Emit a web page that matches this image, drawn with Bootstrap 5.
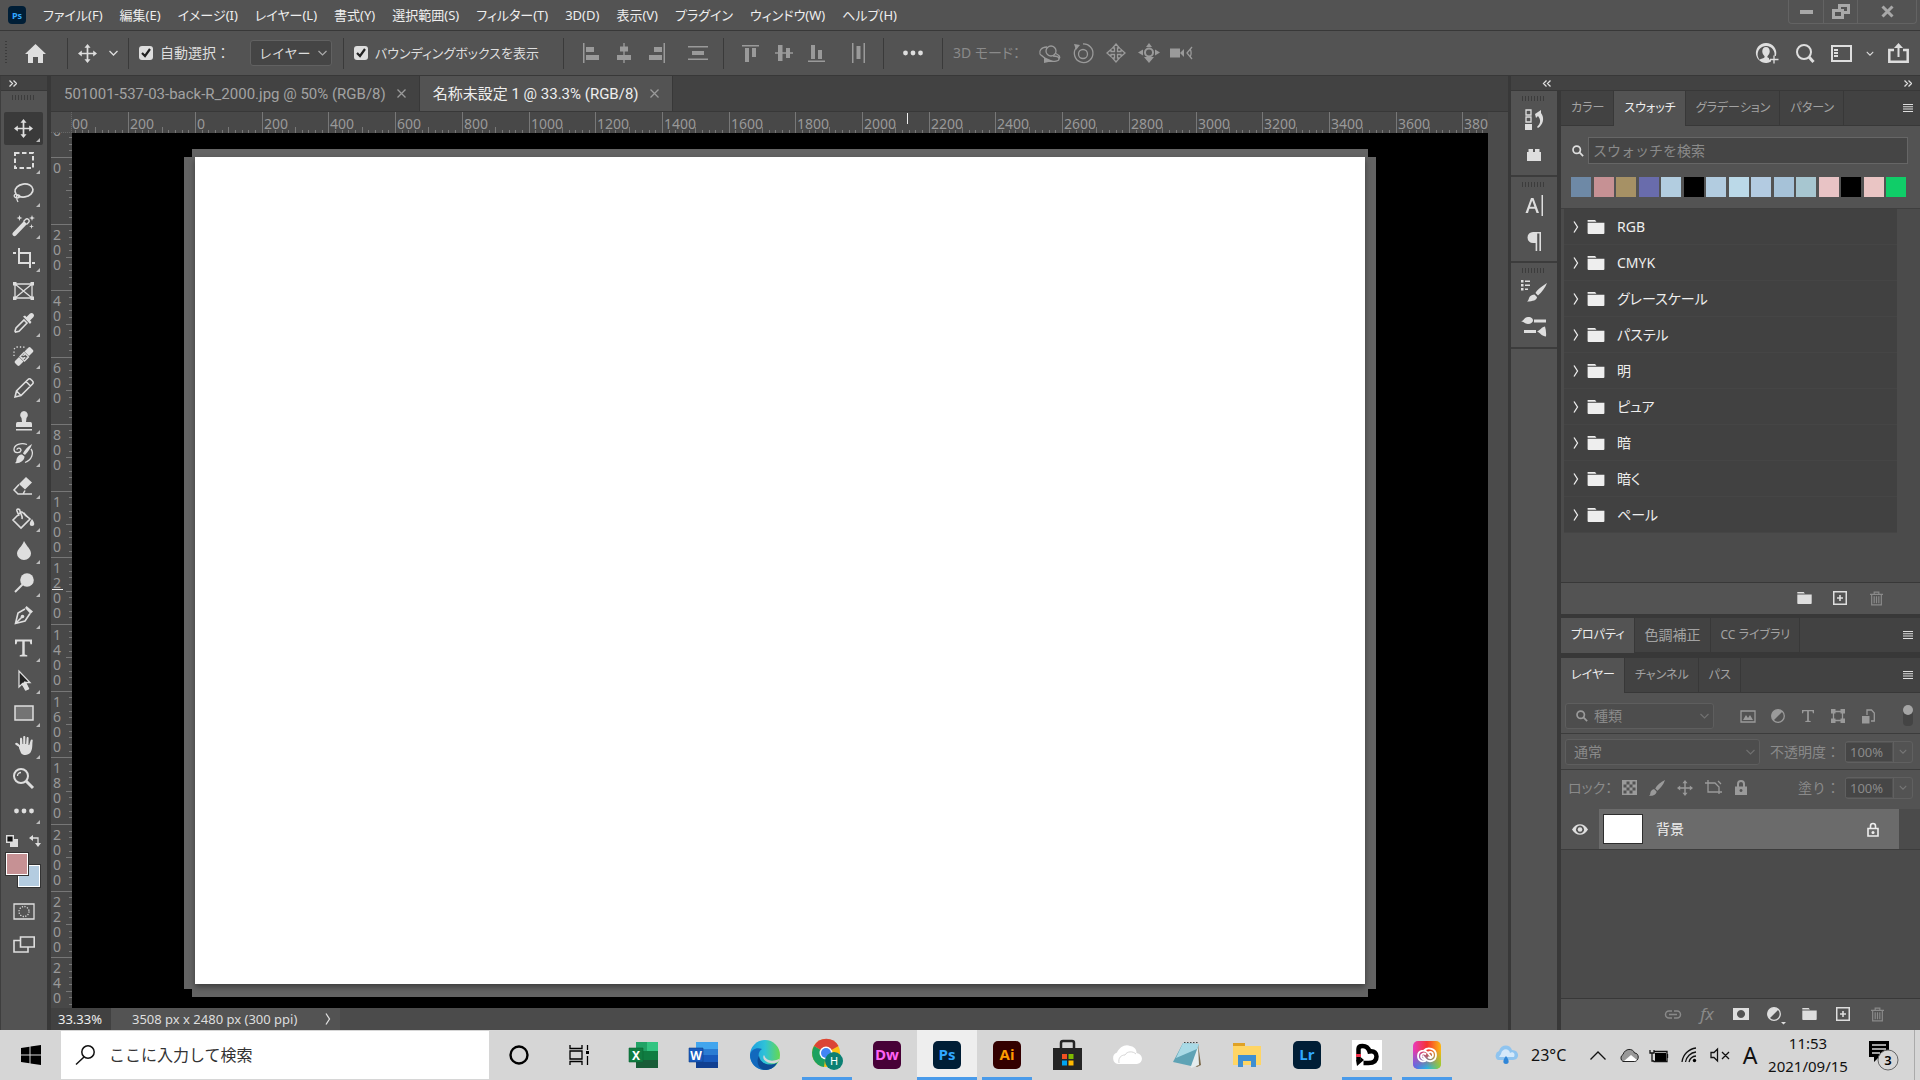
<!DOCTYPE html>
<html lang="ja">
<head>
<meta charset="utf-8">
<meta name="viewport" content="width=device-width, initial-scale=1">
<title>Photoshop</title>
<link href="https://cdn.jsdelivr.net/npm/bootstrap@5.3.0/dist/css/bootstrap.min.css" rel="stylesheet">
<style>
:root{--face:#535353;--dark:#424242;--mid:#4b4b4b;--line:#383838;--ink:#dedede;--dim:#a2a2a2;--off:#8a8a8a}
body{font-family:"Noto Sans","Noto Sans CJK JP",sans-serif;font-size:14px;line-height:20px;color:var(--ink);background:var(--line);font-feature-settings:"palt";overflow:hidden}
svg{display:block;flex:none;overflow:visible}
.btn{--bs-btn-padding-x:0;--bs-btn-padding-y:0;--bs-btn-border-width:0;--bs-btn-border-radius:0;--bs-btn-color:var(--ink);--bs-btn-hover-color:#fff;display:flex;align-items:center;justify-content:center;font-size:14px;line-height:20px;flex:none}
.flat{background:var(--face)}
a{color:inherit;text-decoration:none}
.f{fill:currentColor}
.s{fill:none;stroke:currentColor;stroke-width:2}
.s1{fill:none;stroke:currentColor;stroke-width:1.3}
.kj{font-size:14px;font-feature-settings:normal}
/* menu bar */
.menubar{height:31px;border-bottom:1px solid var(--line)}
.menus{gap:17px;color:#eee;font-size:13px}
.winctl{height:24px;border:1px solid #636363;border-top:0;border-radius:0 0 4px 4px;margin-right:3px;color:#a8a8a8}
.winctl .btn{height:23px;width:34px;color:#a8a8a8}
.winctl .btn+.btn{border-left:1px solid #636363}
.winctl .btn:last-child{width:59px}
/* option bar */
.optbar{height:45px;border-bottom:1px solid var(--line)}
.grip{width:2px;height:24px;margin-left:5px;background:repeating-linear-gradient(#3c3c3c 0 1px,transparent 1px 3px)}
.vsep{width:1px;height:31px;background:#3a3a3a;flex:none}
.w33{width:33px;height:30px}.w50{width:50px;height:30px}.w60{width:60px;height:30px}
.optbar .grp{padding-left:10px}
.pick{padding-left:10px;gap:7px}
.grey{color:#9a9a9a}
.form-check-input.box{width:14px;height:14px;margin:0;border:0;border-radius:3px;background-color:var(--ink);background-size:12px;box-shadow:none;flex:none}
.box:checked{background-color:var(--ink);background-image:url("data:image/svg+xml,%3csvg xmlns='http://www.w3.org/2000/svg' viewBox='0 0 12 12'%3e%3cpath fill='none' stroke='%23222' stroke-width='2.2' d='M2 6l3 3 5-7'/%3e%3c/svg%3e")}
.sel{height:26px;border:1px solid #616161;border-radius:3px;background-color:#454545;color:var(--ink);font-size:13px;line-height:20px;padding:0 20px 0 8px;background-size:9px 6px;background-position:right 4px center;background-image:url("data:image/svg+xml,%3csvg xmlns='http://www.w3.org/2000/svg' viewBox='0 0 9 6'%3e%3cpath fill='none' stroke='%23aaa' stroke-width='1.2' d='M.5 1l4 4 4-4'/%3e%3c/svg%3e")}
.sel.off{background-color:#4d4d4d;border-color:#5e5e5e;color:var(--off);font-size:14px;background-image:url("data:image/svg+xml,%3csvg xmlns='http://www.w3.org/2000/svg' viewBox='0 0 9 6'%3e%3cpath fill='none' stroke='%23707070' stroke-width='1.2' d='M.5 1l4 4 4-4'/%3e%3c/svg%3e")}
/* tool column */
.tools{width:48px;margin-right:3px;border-right:1px solid var(--line);border-left:1px solid #3e3e3e}
.strip{height:15px;background:var(--dark);color:var(--ink);border-bottom:1px solid var(--line)}
.hgrip{height:5px;background:repeating-linear-gradient(90deg,#3c3c3c 0 1px,transparent 1px 3px);width:24px;margin:4px auto 0}
.toolset{height:715px;margin-top:12px}
.toolset .btn{flex:1 1 0;width:39px;margin-left:3px;position:relative}
.toolset .btn.active{background:#3a3a3a;border-radius:2px}
.more::after{content:"";position:absolute;right:3px;bottom:3px;border:2px solid transparent;border-right-color:#bbb;border-bottom-color:#bbb}
.chips{height:50px;width:35px;margin-left:5px;position:relative}
.chip{position:absolute;width:22px;height:22px;border:1px solid #fff;outline:1px solid #333}
.chip.fg{left:0;top:18px;background:#c69194;z-index:1}.chip.bgc{left:12px;top:30px;background:#b4cce0}
/* document */
.doctabs{height:36px;background:var(--dark);border-bottom:1px solid var(--line)}
.doctab{padding:0 13px;border-right:1px solid var(--line);gap:11px;color:var(--dim);font-size:15px;font-family:Roboto,"Noto Sans CJK JP",sans-serif}
.doctab.on{background:var(--face);color:#eee}
.rulers{display:grid;grid-template:21px 1fr 22px/21px 1fr 20px}
.ruler{position:relative;overflow:hidden;background:#484848;color:#999;font-size:14px;line-height:15px;font-feature-settings:normal}
.ruler i{position:absolute;background:#777}
.ruler span{position:absolute}
.rh span{top:4px}
.rv span{left:2px;width:8px;word-break:break-all}
.ruler .cur{background:#eee}
.corner{background:#4d4d4d;border-right:1px dotted #666;border-bottom:1px dotted #666}
.stage{background:#000;display:flex}
.sheet{flex:1;margin:24px 123px;position:relative;z-index:0;background:#fff}
.sheet::before,.sheet::after{content:"";position:absolute;z-index:-2;background:#646464;inset:0 -11px -5px}
.sheet::after{inset:-8px -3px -13px}
.sheet div{position:absolute;inset:0;background:#fff;box-shadow:0 3px 6px #0006;z-index:-1}
.gutter{background:var(--mid)}
.status{grid-column:1/4;background:var(--mid);font-size:13px}
.zoomval{width:60px;background:#414141;color:#eee;border:0;padding:0 0 0 7px;font-size:13px}
.docinfo{width:229px;padding:0 9px 0 21px}
/* dock */
.dock{width:47px;border-right:1px solid var(--line);margin-right:3px}
.dgroup{height:86px;border-bottom:2px solid #3c3c3c;padding-top:1px}
.dgroup .btn{height:36px;width:100%}
/* panels */
.panels{width:359px}
.ptabs{height:35px;background:var(--dark);border-bottom:1px solid var(--line);color:var(--dim);font-size:12px}
.ptab{padding:0 9px 0 10px;border-right:1px solid var(--line);height:35px}
.ptab.on{background:var(--face);color:#eee}
.find{height:27px;background:#454545;border:1px solid #666;border-radius:0;color:var(--ink);font-size:14px;padding:0 4px;font-feature-settings:normal}
.find::placeholder{color:var(--off)}
.sw{width:20px;height:20px;flex:none}
.swlist{background:var(--mid);border-top:1px solid #3f3f3f;height:374px}
.swrow{height:36px;margin:0 23px 0 3px;background:#414141;border-bottom:1px solid #454545;padding-left:9px;color:#eee}
.pfoot{height:32px;border-top:1px solid var(--line)}
.pfoot .btn{width:34px;height:30px}
.pfoot .btn.w36{width:36px}
.rowline{border-bottom:1px solid #3c3c3c}
.num{width:46px;height:18px;border:0;background:#464646;color:var(--off);font-size:13px;padding:0 4px}
.numbox{height:22px;border:1px solid #606060;border-radius:3px;width:68px}
.numbox .btn{width:19px;height:20px;border-left:1px solid #606060;color:#777}
.offc{color:var(--off)}
.ic28 .btn{width:28px;height:26px}
.ic30 .btn{width:30px;height:26px}
.lname{background:#6b6b6b;width:300px;height:40px;color:#eee}
.thumb{width:40px;height:30px;background:#fff;border:1px solid #2e2e2e;margin:0 13px 0 4px}
/* taskbar */
.taskbar{height:50px;background:#d6d6d6;color:#111}
.taskbar .btn{--bs-btn-color:#111;height:50px}
.tsearch{width:428px;height:48px;background:#fff;padding-left:14px;gap:14px}
.tsearch input{border:0;outline:0;background:none;font-size:16px;line-height:24px;width:300px;padding:0}
.tsearch input::placeholder{color:#333}
.apps .btn{width:60px;position:relative}
.run::after{content:"";position:absolute;left:5px;right:5px;bottom:0;height:3px;background:#4a9bea}
.run.cur{background:#eee}.run.cur::after{left:0;right:0}
.tile{width:28px;height:28px;border-radius:5px;font:bold 15px/27px "Open Sans",sans-serif;text-align:center}
.clock{width:88px;font-size:15px;line-height:23px}
</style>
</head>
<body class="d-flex flex-column vh-100">
<svg width="0" height="0" class="position-absolute" aria-hidden="true"><defs>
<symbol id="move" viewBox="0 0 20 20"><path class="f" d="M10 0l3.200 4h-2.300v5.100H16V6.800l4 3.200-4 3.200v-2.300h-5.100V16h2.300L10 20l-3.200-4h2.300v-5.100H4v2.300L0 10l4-3.200v2.300h5.100V4H6.800z"/></symbol>
<symbol id="chev" viewBox="0 0 9 6"><path class="s1" d="M.5 1l4 4 4-4"/></symbol>
<symbol id="rchev" viewBox="0 0 6 12"><path class="s1" d="M1 .5L4.500 6 1 11.500"/></symbol>
<symbol id="dbl" viewBox="0 0 8 7"><path class="s1" d="M.5.500l3 3-3 3M4.500.500l3 3-3 3"/></symbol>
<symbol id="folder" viewBox="0 0 18 15"><path class="f" d="M0 0h8l1.500 2H0zM0 3h18v11a1 1 0 0 1-1 1H1a1 1 0 0 1-1-1z"/></symbol>
<symbol id="plus" viewBox="0 0 14 14"><path class="f" d="M0 0h14v14H0zM1.500 1.500v11h11v-11zM6.200 4h1.600v2.200H10v1.600H7.800V10H6.200V7.800H4V6.200h2.200z" fill-rule="evenodd"/></symbol>
<symbol id="trash" viewBox="0 0 14 15"><path class="s1" d="M0 3h14M4.500 3V.7h5V3M1.800 3v11.300h10.400V3M4.500 5v7.500M7 5v7.500M9.500 5v7.500"/></symbol>
<symbol id="hamb" viewBox="0 0 10 8"><path class="f" d="M0 0h10v1H0zM0 2.300h10v1H0zM0 4.600h10v1H0zM0 7h10v1H0z"/></symbol>
<symbol id="mag" viewBox="0 0 14 14"><circle class="s" cx="5.500" cy="5.500" r="4.300"/><path class="s" stroke-width="3" d="M8.700 8.700L13 13"/></symbol>
<symbol id="x" viewBox="0 0 9 9"><path class="s1" d="M.5.500l8 8M8.500.500l-8 8"/></symbol>
<symbol id="dots" viewBox="0 0 20 6"><circle class="f" cx="2.500" cy="3" r="2.400"/><circle class="f" cx="10" cy="3" r="2.400"/><circle class="f" cx="17.500" cy="3" r="2.400"/></symbol>
<symbol id="half" viewBox="0 0 14 14"><circle class="s1" cx="7" cy="7" r="6.300"/><path class="f" d="M11.500 2.500A6.300 6.300 0 1 0 2.500 11.500z"/></symbol>
<symbol id="lock" viewBox="0 0 12 15"><path class="s" stroke-width="1.600" d="M3 7V4a3 3 0 0 1 6 0v3"/><path class="f" d="M0 6.500h12V15H0zM6 9a1.500 1.500 0 1 0 .01 0z" fill-rule="evenodd"/></symbol>
<symbol id="brush" viewBox="0 0 18 18"><path class="f" d="M18 0C13 2 9 6 7 9.500l2.500 2.500C13 9 16.500 5 18 0zM6 10.500l2.500 2.500c0 3-3 5-8.500 5 2-1.500 1-3 2-5s2.500-2.500 4-2.500z"/></symbol>
<symbol id="tee" viewBox="0 0 18 18"><path class="f" d="M0 0h18v5h-1.600l-.8-3H10.300v14l2.700.6V18H5v-1.400l2.700-.6V2H2.400l-.8 3H0z"/></symbol>
</defs></svg>

<header class="menubar flat d-flex align-items-start">
  <nav class="menus d-flex align-items-center h-100 ps-2" aria-label="メニュー">
    <svg width="18" height="18" viewBox="0 0 18 18"><rect width="18" height="18" rx="4" fill="#001e36"/><text x="9" y="12.500" fill="#31a8ff" font-size="9" font-weight="700" text-anchor="middle">Ps</text></svg>
    <a href="#">ファイル(F)</a><a href="#">編集(E)</a><a href="#">イメージ(I)</a><a href="#">レイヤー(L)</a><a href="#">書式(Y)</a><a href="#">選択範囲(S)</a><a href="#">フィルター(T)</a><a href="#">3D(D)</a><a href="#">表示(V)</a><a href="#">プラグイン</a><a href="#">ウィンドウ(W)</a><a href="#">ヘルプ(H)</a>
  </nav>
  <div class="winctl d-flex ms-auto">
    <button class="btn" aria-label="最小化"><svg width="13" height="4"><rect class="f" width="13" height="4"/></svg></button>
    <button class="btn" aria-label="元に戻す"><svg width="18" height="15"><path class="f" fill-rule="evenodd" d="M6 0h12v10h-6v5H0V5h6zM9 3v2h3v2h3V3zM3 8v4h6V8z"/></svg></button>
    <button class="btn" aria-label="閉じる"><svg width="13" height="11"><path class="s" style="stroke-width:3" d="M1.500.500l10 10M11.500.500l-10 10"/></svg></button>
  </div>
</header>

<div class="optbar flat d-flex align-items-center">
  <div class="grip"></div>
  <button class="btn w60 pe-1" aria-label="ホーム"><svg width="21" height="19"><path class="f" d="M10.500 0L21 10h-3v9h-5v-6H8v6H3v-9H0z"/></svg></button>
  <div class="vsep"></div>
  <button class="btn w60 gap-2" aria-label="移動ツール"><svg width="19" height="19"><use href="#move"/></svg><svg class="ms-1" width="9" height="6"><use href="#chev"/></svg></button>
  <div class="vsep"></div>
  <div class="pick d-flex align-items-center" style="width:121px">
    <input class="form-check-input box" type="checkbox" id="auto" checked><label class="kj text-nowrap" for="auto">自動選択：</label>
  </div>
  <select class="form-select sel" style="width:82px" aria-label="選択対象"><option>レイヤー</option></select>
  <div class="vsep" style="margin-left:11px"></div>
  <div class="pick d-flex align-items-center" style="width:219px">
    <input class="form-check-input box" type="checkbox" id="bbox" checked><label class="text-nowrap" style="font-size:13px" for="bbox">バウンディングボックスを表示</label>
  </div>
  <div class="vsep"></div>
  <div class="grp d-flex grey">
    <button class="btn w33 grey" aria-label="左揃え"><svg width="16" height="20"><path class="f" d="M0 0h1.500v20H0zM3 4h8v5H3zM3 12h13v5H3z"/></svg></button>
    <button class="btn w33 grey" aria-label="水平中央"><svg width="14" height="20"><path class="f" d="M6.300 0h1.400v20H6.300zM3 3.500h8v5H3zM0 12h14v5H0z"/></svg></button>
    <button class="btn w33 grey" aria-label="右揃え"><svg width="16" height="20"><path class="f" d="M14.500 0H16v20h-1.500zM5 4h8v5H5zM0 12h13v5H0z"/></svg></button>
    <button class="btn w50 grey" aria-label="垂直分布"><svg width="20" height="14"><path class="f" d="M0 0h20v1.500H0zM0 12.500h20V14H0zM4 5h12v4H4z"/></svg></button>
  </div>
  <div class="vsep"></div>
  <div class="grp d-flex">
    <button class="btn w33 grey" aria-label="上揃え"><svg width="17" height="17"><path class="f" d="M0 0h17v1.500H0zM3 3h4v14H3zM10 3h4v9h-4z"/></svg></button>
    <button class="btn w33 grey" aria-label="垂直中央"><svg width="18" height="16"><path class="f" d="M0 7.300h18v1.400H0zM3 0h4.500v16H3zM11 3h4v10h-4z"/></svg></button>
    <button class="btn w33 grey" aria-label="下揃え"><svg width="17" height="17"><path class="f" d="M0 15.500h17V17H0zM3 0h4v14H3zM10 5h4v9h-4z"/></svg></button>
    <button class="btn w50 grey" aria-label="水平分布"><svg width="13" height="20"><path class="f" d="M0 0h1.500v20H0zM11.500 0H13v20h-1.500zM4.500 3h4v13h-4z"/></svg></button>
  </div>
  <div class="vsep"></div>
  <button class="btn w50 mx-1" aria-label="詳細"><svg width="20" height="6"><use href="#dots"/></svg></button>
  <div class="vsep"></div>
  <span class="offc" style="width:90px;padding-left:10px">3D モード：</span>
  <button class="btn w33 grey" aria-label="3D オービット"><svg width="22" height="20"><circle class="s1" cx="12" cy="8" r="5"/><path class="s1" d="M8 4C2 4 0 8 1 11c1 2 4 2 6 6M14 13c3 0 6 1 6 3s-4 3-11 2M16 10c4 2 6 4 4 6"/><path class="f" d="M5 14l9 4-9 2z"/></svg></button>
  <button class="btn w33 grey" aria-label="3D ロール"><svg width="20" height="20"><circle class="s1" cx="10" cy="11" r="4.500"/><path class="s1" d="M3 5a9.300 9.300 0 1 0 7-4"/><path class="f" d="M1 1l6 1-4 5z"/></svg></button>
  <button class="btn w33 grey" aria-label="3D パン"><svg width="20" height="20" viewBox="0 0 20 20"><path class="s1" d="M10 1l3.500 4h-2v3.500h3.500v-2L19 10l-4 3.500v-2h-3.500V15h2L10 19l-3.500-4h2v-3.500H5v2L1 10l4-3.500v2h3.500V5h-2z"/></svg></button>
  <button class="btn w33 grey" aria-label="3D スライド"><svg width="22" height="20"><circle class="s" cx="11" cy="9.500" r="4"/><path class="f" d="M11 0l3 4H8zM0 9.500l5-3v6zM22 9.500l-5-3v6zM11 20l-5-6h10z"/></svg></button>
  <button class="btn w33 grey" aria-label="3D ズーム"><svg width="23" height="14"><path class="f" d="M0 2.500h10v9H0zM10 7l4-4v8z"/><path class="s1" d="M22 1l-5 6 5 6M20 3c1.500 2 1.500 6 0 8"/></svg></button>
  <div class="d-flex align-items-center ms-auto" style="margin-right:5px">
    <button class="btn w33" aria-label="招待"><svg width="23" height="21"><path class="f" d="M10 0a10 10 0 1 0 5 18.600v-2.200h-2V15c-2-.3-2-1.500-1-2.500 3-3 2-8.500-2-8.500s-5 5.500-2 8.500c1 1 1 2.200-1 2.800-2 .5-3 1-3.500 1.500A8.500 8.500 0 1 1 18.500 10v3h1.300A10 10 0 0 0 10 0z"/><path class="s1" d="M18 12.500v8M14 16.500h8.500"/></svg></button>
    <button class="btn w33 ms-1" aria-label="検索"><svg width="18" height="19"><circle class="s" cx="8" cy="8" r="7"/><path class="s" style="stroke-width:3" d="M13 13l4.500 5"/></svg></button>
    <button class="btn w33 ms-1" aria-label="ワークスペース"><svg width="21" height="17"><path class="s" d="M1 1h19v15H1z"/><path class="f" d="M3 4h4v2H3zM3 7h4v2H3zM3 10h4v2H3z"/></svg></button>
    <button class="btn px-2" aria-label="ワークスペース一覧"><svg width="8" height="5" viewBox="0 0 9 6"><use href="#chev"/></svg></button>
    <button class="btn w33" aria-label="共有"><svg width="21" height="20"><path class="s" style="stroke-width:2.500" d="M6 7H1.300v11.700h18.400V7H15"/><path class="s" d="M10.500 14V3"/><path class="f" d="M10.500 0l4.500 5H6z"/></svg></button>
  </div>
</div>

<main class="d-flex flex-grow-1" style="min-height:0">
  <aside class="tools flat d-flex flex-column" aria-label="ツール">
    <div class="strip d-flex align-items-center ps-2"><svg width="8" height="7"><use href="#dbl"/></svg></div>
    <div class="hgrip"></div>
    <div class="toolset d-flex flex-column">
      <button class="btn more active" aria-label="移動"><svg width="19" height="19"><use href="#move"/></svg></button>
      <button class="btn more" aria-label="選択"><svg width="20" height="17"><path class="s" stroke-dasharray="4.500 2.500" d="M1 1h18v15H1z"/></svg></button>
      <button class="btn more" aria-label="なげなわ"><svg width="21" height="20"><ellipse class="s" style="stroke-width:1.700" cx="11" cy="7.500" rx="9" ry="6.500" transform="rotate(-8 11 7.500)"/><path class="s1" d="M3 11c-3 1-2 4 1 4s4-3 1-3-1 5 0 7"/></svg></button>
      <button class="btn more" aria-label="自動選択"><svg width="23" height="21"><path class="f" d="M1 17.500L12 6l3 3L4 20.500a2.100 2.100 0 0 1-3-3z"/><path class="s1" d="M11.500 6.500l2-2a2 2 0 0 1 3 3l-2 2"/><path class="f" d="M7.500 0l.8 2.200 2.200.8-2.200.8L7.500 6l-.8-2.200L4.500 3l2.200-.8zM20 0l.8 2.200L23 3l-2.200.8L20 6l-.8-2.200L17 3l2.200-.8zM19.500 9l.6 1.900 1.900.6-1.900.6-.6 1.900-.6-1.900-1.900-.6 1.900-.6z"/></svg></button>
      <button class="btn more" aria-label="切り抜き"><svg width="22" height="20"><path class="s" d="M0 5h3M6 0v15h12M22 15h-3M6 5h11v15"/></svg></button>
      <button class="btn" aria-label="フレーム"><svg width="21" height="18"><path class="s1" d="M2 2h17v14H2zM2 2l17 14M19 2L2 16"/><path class="f" d="M0 0h3.500v3.500H0zM17.500 0H21v3.500h-3.500zM0 14.500h3.500V18H0zM17.500 14.500H21V18h-3.500z"/></svg></button>
      <button class="btn more" aria-label="スポイト"><svg width="20" height="20"><path class="s" style="stroke-width:1.600" d="M10 7l3 3-8 8.200-3.500.8-.5-.8 1-3.200z"/><path class="f" d="M9 3.500l2-1 1.500 1.500L16 .6a2.500 2.500 0 0 1 3.500 3.500L16 7.500 17.500 9l-1.500 2z"/></svg></button>
      <button class="btn more" aria-label="修復ブラシ"><svg width="21" height="20"><path class="f" d="M2 15l4-4 4.500 4.500-4 4q-1 .8-2 0L2 17q-.8-1 0-2zM15.500 1.500q1-.8 2 0L20 4q.8 1 0 2l-4 4-4.500-4.500z"/><path class="s1" d="M7 10.500l4-4 4.500 4.500-4 4z"/><path class="s1" stroke-dasharray="1.500 1.500" d="M8 11.500l4 .5 2 1M10 8.500l.5 4 1 2M11.500 8v4h3"/><path class="s1" stroke-dasharray="1.300 2" d="M1 10V5q0-4 4-4h5q2 0 3 2"/></svg></button>
      <button class="btn more" aria-label="鉛筆"><svg width="20" height="20"><path class="s" style="stroke-width:1.600" d="M1 19l1.500-6L14 1.500a2 2 0 0 1 3 0l1.500 1.500a2 2 0 0 1 0 3L7 17.500zM12 3.500l4.500 4.500M2.500 13L7 17.500"/></svg></button>
      <button class="btn more" aria-label="スタンプ"><svg width="16" height="20"><path class="f" d="M8 0a4 4 0 0 1 2.500 7L10 11h4.500q1.500 0 1.500 2v3H0v-3q0-2 1.500-2H6l-.5-4A4 4 0 0 1 8 0zM0 18h16v1.600H0z"/></svg></button>
      <button class="btn more" aria-label="ヒストリーブラシ"><svg width="21" height="21"><path class="f" d="M19 1c-4 2-8 7-9 9.500l2 1.500c2-2 6-7 7-11zM9 11.500l2.500 2C11.500 18 6 21 2 20c2-1 1-3 2-5s3-4 5-3.500z"/><path class="s1" d="M14 1.500C8-1 1 2 1 6.500c0 4 6 4 7 1 0-3-4-3-4-.8M18 6c3 4 1 11-6 13.500"/></svg></button>
      <button class="btn more" aria-label="消しゴム"><svg width="21" height="18"><path class="f" d="M13 0l6 5.500-7 7L6 7z"/><path class="s" style="stroke-width:1.500" d="M6 7.500L1 13l4 4h5l2-3.500M5 17h14"/></svg></button>
      <button class="btn more" aria-label="塗りつぶし"><svg width="23" height="21"><path class="s" style="stroke-width:1.600" d="M9 4L1 12l8 8 9-9-8-7zM10 11c1-3-2-6-2-8s-4-3-3 0l2 5"/><path class="f" d="M17 10l-5-6c-1 2 1 5 5 6zM20 11c3 4 3 7 0 7s-3-3 0-7z"/></svg></button>
      <button class="btn more" aria-label="ぼかし"><svg width="14" height="19"><path class="f" d="M7 0c3 6 7 8 7 12.500a7 6.500 0 0 1-14 0C0 8 5 6 7 0z"/></svg></button>
      <button class="btn more" aria-label="覆い焼き"><svg width="20" height="20"><circle class="f" cx="13" cy="7" r="6.800"/><path class="s" d="M9 11l-8 8"/></svg></button>
      <button class="btn more" aria-label="ペン"><svg width="19" height="19"><path class="f" d="M12.500 0L19 5.500 16.500 8 11 2z"/><path class="s" style="stroke-width:1.600" d="M11 3L4 7 1.500 17.500 11 15l5-7.500M1.500 17.500L8 11"/><circle class="f" cx="8.500" cy="10.500" r="1.800"/></svg></button>
      <button class="btn more" aria-label="文字"><svg width="17" height="18"><use href="#tee"/></svg></button>
      <button class="btn more" aria-label="パス選択"><svg width="14" height="21"><path d="M2 1v16l3.500-3.500L8.500 20l3-1.300-3-6.200H13z" fill="#222" stroke="#dedede" stroke-width="1.300"/><path class="f" d="M4.500 14.500L8 11l4 8-3 1.500z"/></svg></button>
      <button class="btn more" aria-label="長方形"><svg width="20" height="16"><path d="M1 1h18v14H1z" fill="#747474" stroke="#dedede" stroke-width="1.500"/></svg></button>
      <button class="btn more" aria-label="手のひら"><svg width="18" height="19"><path class="f" d="M4 12V11L.4 8.600C-.5 7 1.500 6 3 7.500L5 9.200V3c0-1.600 2-1.600 2.200 0L7.500 8h.7V1c0-1.400 2.100-1.400 2.100 0v7h.8l.5-6c.1-1.500 2.100-1.300 2 .1L13.500 9h.7l1.500-4.800c.5-1.300 2.300-.8 2 .6C17 8 18 13 15.500 16.500 13.500 19.500 8 20 6 17z"/></svg></button>
      <button class="btn" aria-label="ズーム"><svg width="21" height="21"><circle class="s" cx="8" cy="8" r="7"/><path class="s1" d="M4.500 8A3.500 3.500 0 0 1 8 4.500"/><path class="s" style="stroke-width:3" d="M13 13l7 7"/></svg></button>
      <button class="btn more" aria-label="ツールバー編集"><svg width="20" height="6"><use href="#dots"/></svg></button>
    </div>
    <div class="chips mt-2">
      <div class="d-flex justify-content-between"><svg width="12" height="12" viewBox="0 0 12 12"><path class="f" d="M4 4h8v8H4z"/><path d="M.700.700h6.600v6.600H.700z" fill="#111" stroke="#dedede" stroke-width="1.400"/></svg><svg width="12" height="12" viewBox="0 0 12 12"><path class="s1" d="M3 3h6v6"/><path class="f" d="M0 3l4-3v6zM9 12L6 8h6z"/></svg></div>
      <div class="chip fg"></div><div class="chip bgc"></div>
    </div>
    <button class="btn mt-1" style="height:44px" aria-label="クイックマスク"><svg width="22" height="17"><path class="s1" d="M1 1h20v15H1z"/><circle class="s1" cx="11" cy="8.500" r="5" stroke-dasharray="1.200 1.400"/></svg></button>
    <button class="btn" style="height:22px" aria-label="スクリーンモード"><svg width="22" height="17"><path class="s" style="stroke-width:1.600" d="M7.500 1h13.700v10H7.500zM7.500 4.500H1V16h14v-5"/></svg></button>
  </aside>

  <section class="d-flex flex-column flex-grow-1" style="min-width:0;margin-right:3px">
    <div class="doctabs d-flex">
      <div class="doctab d-flex align-items-center"><span>501001-537-03-back-R_2000.jpg @ 50% (RGB/8)</span><button class="btn grey" aria-label="閉じる"><svg width="9" height="9"><use href="#x"/></svg></button></div>
      <div class="doctab on d-flex align-items-center"><span>名称未設定 1 @ 33.3% (RGB/8)</span><button class="btn grey" aria-label="閉じる"><svg width="9" height="9"><use href="#x"/></svg></button></div>
    </div>
    <div class="rulers flex-grow-1">
      <div class="corner"></div><div class="ruler rh" id="rh"></div><div class="gutter"></div>
      <div class="ruler rv" id="rv"></div>
      <div class="stage"><div class="sheet"><div></div></div></div>
      <div class="gutter"></div>
      <div class="status d-flex align-items-stretch">
        <input class="zoomval" value="33.33%" aria-label="ズーム率">
        <div class="docinfo flat d-flex align-items-center justify-content-between"><span>3508 px x 2480 px (300 ppi)</span><svg width="6" height="12"><use href="#rchev"/></svg></div>
      </div>
    </div>
  </section>

  <div class="d-flex flex-column">
    <div class="strip d-flex align-items-center justify-content-between" style="padding:0 8px 0 32px"><svg width="8" height="7" viewBox="0 0 8 7"><path class="s1" d="M3.500.500l-3 3 3 3M7.500.500l-3 3 3 3"/></svg><svg width="8" height="7"><use href="#dbl"/></svg></div>
    <div class="d-flex flex-grow-1">
      <aside class="dock flat">
        <div class="dgroup"><div class="hgrip"></div>
          <button class="btn" aria-label="ヒストリー"><svg width="19" height="21"><path class="s1" d="M1 1h5v5H1zM1 8h5v5H1z"/><path class="f" d="M0 15h7v6H0zM10 5l6-4v3c4 5 2 12-3 15l-1-1c4-4 4-7 1-11l-2 2z"/></svg></button>
          <button class="btn" aria-label="プラグイン"><svg width="14" height="12"><path class="f" d="M0 3h1.500V0H6v3h2V0h4.500v3H14v9H0z"/></svg></button></div>
        <div class="dgroup"><div class="hgrip"></div>
          <button class="btn" aria-label="文字パネル"><svg width="18" height="21"><path class="f" d="M6 3h2.500L14 18h-2.500L10 13.700H4.300L3 18H.500zM7.200 5.500L5 11.700h4.400zM16.500 0H18v21h-1.500z"/></svg></button>
          <button class="btn" aria-label="段落パネル"><svg width="14" height="19"><path class="f" d="M6 0h8v19h-1.600V1.600h-2.200V19H8.600v-8H6A5.500 5.500 0 0 1 6 0z"/></svg></button></div>
        <div class="dgroup"><div class="hgrip"></div>
          <button class="btn" aria-label="ブラシ"><svg width="26" height="22" viewBox="0 0 26 22"><path class="f" d="M0 0h2.500v2.500H0zM4 .500h5v1.500H4zM0 4h2.500v2.500H0zM4 4.500h5V6H4zM0 8h2.500v2.500H0zM4 8.500h3V10H4z"/><g transform="translate(6 3)"><path class="f" d="M20 0C15 3 10 7 8.500 10l2.500 2.500C15 9 18.500 4 20 0zM7.500 11.500l2.500 2.500c0 3-4 4.500-10 4.500 2-1.500 1.500-3 2.500-4.500s3-2.500 5-2.500z"/></g></svg></button>
          <button class="btn" aria-label="ブラシ設定"><svg width="26" height="20"><path class="f" d="M0 4c3 0 3-4 7-4s5 2 5 3.500S10 7 7 7 3 5 0 4zM13 2.500h12v3H13zM3 13h12v3H3zM16 14.500c3-1 5-5 8-5q1.500 5 1 10c-4 0-6-4-9-5z"/></svg></button></div>
      </aside>

      <aside class="panels flat d-flex flex-column">
        <div class="ptabs d-flex align-items-center">
          <a class="ptab d-flex align-items-center" href="#">カラー</a><a class="ptab on d-flex align-items-center" href="#">スウォッチ</a><a class="ptab d-flex align-items-center" href="#">グラデーション</a><a class="ptab d-flex align-items-center" href="#">パターン</a>
          <button class="btn ms-auto" style="margin-right:7px" aria-label="メニュー"><svg width="10" height="8"><use href="#hamb"/></svg></button>
        </div>
        <div class="d-flex align-items-center gap-1" style="padding:11px 12px 13px 11px"><svg width="12" height="12"><use href="#mag"/></svg><input class="find flex-grow-1" placeholder="スウォッチを検索" aria-label="スウォッチを検索"></div>
        <div class="d-flex justify-content-between" style="padding:0 14px 11px 10px">
          <div class="sw" style="background:#6e89a6"></div><div class="sw" style="background:#c69194"></div><div class="sw" style="background:#a69165"></div><div class="sw" style="background:#696cac"></div><div class="sw" style="background:#b2cde0"></div><div class="sw" style="background:#000"></div><div class="sw" style="background:#b2cce0"></div><div class="sw" style="background:#bbd9e8"></div><div class="sw" style="background:#b3cbe1"></div><div class="sw" style="background:#a6c2d8"></div><div class="sw" style="background:#a7c6d0"></div><div class="sw" style="background:#e8c3c5"></div><div class="sw" style="background:#000"></div><div class="sw" style="background:#eac5c4"></div><div class="sw" style="background:#10cd68"></div>
        </div>
        <div class="swlist" id="swlist"></div>
        <div class="pfoot d-flex justify-content-end" style="padding-right:26px">
          <button class="btn w36" aria-label="新規グループ"><svg width="15" height="12"><use href="#folder"/></svg></button>
          <button class="btn w36" aria-label="新規スウォッチ"><svg width="14" height="14"><use href="#plus"/></svg></button>
          <button class="btn w36 offc" aria-label="削除"><svg width="13" height="15"><use href="#trash"/></svg></button>
        </div>
        <div style="height:4px;background:var(--line)"></div>
        <div class="ptabs d-flex align-items-center">
          <a class="ptab on d-flex align-items-center" href="#">プロパティ</a><a class="ptab kj d-flex align-items-center" href="#">色調補正</a><a class="ptab d-flex align-items-center" href="#">CC ライブラリ</a>
          <button class="btn ms-auto" style="margin-right:7px" aria-label="メニュー"><svg width="10" height="8"><use href="#hamb"/></svg></button>
        </div>
        <div style="height:5px;background:var(--line)"></div>
        <div class="ptabs d-flex align-items-center">
          <a class="ptab on d-flex align-items-center" href="#">レイヤー</a><a class="ptab d-flex align-items-center" href="#">チャンネル</a><a class="ptab d-flex align-items-center" href="#">パス</a>
          <button class="btn ms-auto" style="margin-right:7px" aria-label="メニュー"><svg width="10" height="8"><use href="#hamb"/></svg></button>
        </div>
        <div class="rowline d-flex align-items-center ps-1" style="height:41px;padding-top:6px">
          <div class="position-relative"><select class="form-select sel off" style="width:149px;padding-left:28px" aria-label="種類"><option>種類</option></select><svg class="grey position-absolute" style="left:11px;top:7px" width="12" height="12"><use href="#mag"/></svg></div>
          <div class="ic30 d-flex grey" style="margin-left:19px">
            <button class="btn grey" aria-label="画像"><svg width="16" height="13"><path class="s1" d="M1 1h14v11H1z"/><path class="f" d="M3 10l3-5 2 3 2-3 3 5z"/></svg></button>
            <button class="btn grey" aria-label="調整"><svg width="14" height="14"><use href="#half"/></svg></button>
            <button class="btn grey" aria-label="テキスト"><svg width="12" height="12"><use href="#tee"/></svg></button>
            <button class="btn grey" aria-label="シェイプ"><svg width="14" height="14"><path class="s1" d="M2.500 2.500h9v9h-9z"/><path class="f" d="M0 0h4.500v4.500H0zM9.500 0H14v4.500H9.500zM0 9.500h4.500V14H0zM9.500 9.500H14V14H9.500z"/></svg></button>
            <button class="btn grey" aria-label="スマートオブジェクト"><svg width="13" height="15"><path class="s1" d="M5 6V1h4.500L12.300 4v8H9"/><path class="f" d="M0 7h7.500v7.500H0z"/></svg></button>
          </div>
          <svg class="ms-auto" width="10" height="22" style="margin-right:7px"><rect y="3" width="10" height="18" rx="4" fill="#444"/><circle cx="5" cy="5" r="5" fill="#a5a5a5"/></svg>
        </div>
        <div class="rowline d-flex align-items-center ps-1 offc" style="height:36px">
          <select class="form-select sel off" style="width:195px" aria-label="描画モード"><option>通常</option></select>
          <label class="ms-auto kj" for="opa">不透明度：</label>
          <div class="numbox d-flex align-items-center" style="margin:0 7px 0 5px"><input class="num" id="opa" value="100%"><button class="btn ms-auto" aria-label="開く"><svg width="8" height="5" viewBox="0 0 9 6"><use href="#chev"/></svg></button></div>
        </div>
        <div class="d-flex align-items-center offc ps-1 pb-1" style="height:39px">
          <span class="text-nowrap" style="width:50px;padding-left:3px">ロック：</span>
          <div class="ic28 d-flex">
            <button class="btn grey" aria-label="透明ピクセル"><svg width="15" height="15"><path class="f" fill-rule="evenodd" d="M0 0h15v15H0zM4.500 1.500v3h3v-3zM10.500 1.500v3h3v-3zM1.500 4.500v3h3v-3zM7.500 4.500v3h3v-3zM4.500 7.500v3h3v-3zM10.500 7.500v3h3v-3zM1.500 10.500v3h3v-3zM7.500 10.500v3h3v-3z"/></svg></button>
            <button class="btn grey" aria-label="画像ピクセル"><svg width="16" height="16"><use href="#brush"/></svg></button>
            <button class="btn grey" aria-label="位置"><svg width="16" height="16"><use href="#move"/></svg></button>
            <button class="btn grey" aria-label="アートボード"><svg width="17" height="15"><path class="s1" d="M0 3h3M3 0v12h14M14 14v-6M3 3h7l4 4v5M13 1l3 3"/></svg></button>
            <button class="btn grey" aria-label="すべて"><svg width="12" height="15"><use href="#lock"/></svg></button>
          </div>
          <label class="ms-auto kj" for="fil">塗り：</label>
          <div class="numbox d-flex align-items-center" style="margin:0 7px 0 5px"><input class="num" id="fil" value="100%"><button class="btn ms-auto" aria-label="開く"><svg width="8" height="5" viewBox="0 0 9 6"><use href="#chev"/></svg></button></div>
        </div>
        <div class="flex-grow-1" style="background:var(--mid)">
          <div class="d-flex align-items-center rowline" style="height:41px">
            <button class="btn flat" style="width:38px;height:40px" aria-label="表示"><svg width="16" height="11"><path class="f" fill-rule="evenodd" d="M0 5.500C4-1.500 12-1.500 16 5.500 12 12.500 4 12.500 0 5.500zM8 1.500a4 4 0 1 0 .01 0z"/><circle class="f" cx="8" cy="5.500" r="2.300"/></svg></button>
            <div class="lname d-flex align-items-center"><div class="thumb"></div><span>背景</span><svg class="ms-auto" style="margin-right:20px" width="12" height="15"><path class="s1" style="stroke-width:1.600" d="M1 6.500h10V14H1zM3.500 6V4a2.500 2.500 0 0 1 5 0v2"/><circle class="f" cx="6" cy="10.500" r="1.500"/></svg></div>
          </div>
        </div>
        <div class="pfoot d-flex justify-content-end" style="padding-right:26px">
          <button class="btn offc" aria-label="リンク"><svg width="18" height="10"><path class="s" style="stroke-width:1.500" d="M8 2H5a3 3 0 0 0 0 7h3M10 2h3a3 3 0 0 1 0 7h-3M5 5.500h8"/></svg></button>
          <button class="btn offc fst-italic" aria-label="スタイル"><span style="font-size:17px">fx</span></button>
          <button class="btn" aria-label="マスク"><svg width="16" height="12"><path class="f" fill-rule="evenodd" d="M0 0h16v12H0zM8 2a4 4 0 1 0 .01 0z"/></svg></button>
          <button class="btn" aria-label="調整レイヤー"><svg width="16" height="14"><circle class="s1" cx="7" cy="7" r="6.300"/><path class="f" d="M11.500 2.500A6.300 6.300 0 1 0 2.500 11.500zM14 15h5l-2.500 2.500z"/></svg></button>
          <button class="btn" aria-label="グループ"><svg width="15" height="12"><use href="#folder"/></svg></button>
          <button class="btn" aria-label="新規"><svg width="14" height="14"><use href="#plus"/></svg></button>
          <button class="btn offc" aria-label="削除"><svg width="13" height="15"><use href="#trash"/></svg></button>
        </div>
      </aside>
    </div>
  </div>
</main>

<footer class="taskbar d-flex align-items-center">
  <button class="btn" aria-label="スタート" style="width:61px"><svg width="20" height="20"><path fill="#000" d="M0 3l8.500-1.200v7.700H0zM9.500 1.600L20 0v9.500H9.500zM0 10.500h8.500v7.700L0 17zM9.500 10.500H20V20L9.500 18.400z"/></svg></button>
  <div class="tsearch d-flex align-items-center"><svg width="20" height="20"><circle cx="13" cy="7" r="6.200" fill="none" stroke="#111" stroke-width="1.500"/><path d="M9 12l-8 7.500" stroke="#111" stroke-width="1.500"/></svg><input placeholder="ここに入力して検索" aria-label="検索"></div>
  <div class="apps d-flex">
    <button class="btn" aria-label="Cortana"><svg width="20" height="20"><circle cx="10" cy="10" r="8.500" fill="none" stroke="#000" stroke-width="2.400"/></svg></button>
    <button class="btn" aria-label="タスクビュー"><svg width="20" height="20"><path fill="none" stroke="#000" stroke-width="1.300" d="M1 0v3.500h12V0M1 20v-3.500h12V20M1 6h12v8H1zM18.500 0v5M18.500 11v9"/><path d="M17 6h3v3h-3z"/></svg></button>
    <button class="btn ms-1" aria-label="Excel"><svg width="29" height="28"><path fill="#21a366" d="M7 1h22v26H7z"/><path fill="#33c481" d="M18 1h11v9H18z"/><path fill="#107c41" d="M7 10h22v9H7z"/><path fill="#185c37" d="M7 19h22v8H7z"/><path fill="#107c41" stroke="#0b6433" stroke-width=".6" d="M0 7h14v14H0z"/><text x="7" y="18.500" font-size="12" font-weight="700" fill="#fff" text-anchor="middle">X</text></svg></button>
    <button class="btn" aria-label="Word"><svg width="29" height="28"><path fill="#41a5ee" d="M7 1h22v7H7z"/><path fill="#2b7cd3" d="M7 8h22v6H7z"/><path fill="#185abd" d="M7 14h22v7H7z"/><path fill="#103f91" d="M7 21h22v6H7z"/><path fill="#185abd" stroke="#123f8c" stroke-width=".6" d="M0 7h14v14H0z"/><text x="7" y="18.500" font-size="12" font-weight="700" fill="#fff" text-anchor="middle">W</text></svg></button>
    <button class="btn" style="margin-left:2px" aria-label="Edge"><svg width="30" height="30" viewBox="0 0 30 30"><defs><linearGradient id="eg"><stop offset="0" stop-color="#1e9de0"/><stop offset=".5" stop-color="#2fc2d8"/><stop offset="1" stop-color="#66d94f"/></linearGradient></defs><circle cx="15" cy="15" r="15" fill="url(#eg)"/><path fill="#1269bd" d="M0 15c1-6 7-8 12-6-3 2-4 5-3 9 2 6 10 9 18 5-3 5-8 7-12 7C6 30 0 23 0 15z"/><path fill="#0c4a94" d="M9 16c1 7 9 11 18 7-4 7-11 8-15 6s-6-8-3-13z"/><path fill="#d6d6d6" d="M14 15c2 6 8 7 15 4 1 3-4 5-9 4-6-1-8-6-6-8z"/></svg></button>
    <button class="btn run" style="margin-left:2px" aria-label="Chrome"><svg width="31" height="32" viewBox="0 0 31 32"><circle cx="14" cy="14" r="14" fill="#fbc116"/><path fill="#db4437" d="M14 14L2 7a14 14 0 0 1 24.500 0z"/><path fill="#1da15f" d="M14 14l-2 14A14 14 0 0 1 2 7z"/><circle cx="14" cy="14" r="6.500" fill="#fff"/><circle cx="14" cy="14" r="5" fill="#4285f4"/><circle cx="22" cy="22" r="9" fill="#0b8073"/><text x="22" y="26" font-size="11" fill="#fff" text-anchor="middle">H</text></svg></button>
    <button class="btn" aria-label="Dreamweaver"><span class="tile" style="background:#470137;color:#ff61f6">Dw</span></button>
    <button class="btn run cur" aria-label="Photoshop"><span class="tile" style="background:#001e36;color:#31a8ff">Ps</span></button>
    <button class="btn run" aria-label="Illustrator"><span class="tile" style="background:#330000;color:#ff9a00">Ai</span></button>
    <button class="btn" aria-label="Store"><svg width="29" height="30"><path fill="#252525" d="M0 8h29v22H0z"/><path fill="none" stroke="#252525" stroke-width="2.500" d="M8 10V3q0-2 2-2h9q2 0 2 2v7"/><path fill="#f25022" d="M9 14h5v5H9z"/><path fill="#7fba00" d="M15.500 14h5v5h-5z"/><path fill="#00a4ef" d="M9 20.500h5v5H9z"/><path fill="#ffb900" d="M15.500 20.500h5v5h-5z"/></svg></button>
    <button class="btn" aria-label="OneDrive"><svg width="30" height="20"><path fill="#fff" d="M6 19a6 6 0 0 1-1-11.500C7 2 14-1.500 18 1c3 0 7 3 6.500 7 7 1 7.500 10 .5 11z"/><path fill="none" stroke="#d6d6d6" d="M7 18c-1-5 2-8 6-8 2-4 8-4 11-1"/></svg></button>
    <button class="btn" aria-label="メモ帳"><svg width="28" height="26"><path fill="#7d6a4c" d="M25 2l3 21-4 2-3-2z"/><path fill="#e4ecee" d="M25 2l1 21-8 3-1-3z"/><path fill="#5fa3b5" d="M10 1l16 1-8 22L0 20z"/><path fill="#a9dae6" d="M10 1l16 1-2 5L3 16z"/><path stroke="#444" stroke-dasharray="1.500 1.500" d="M11 .5h15"/></svg></button>
    <button class="btn" aria-label="エクスプローラー"><svg width="28" height="24"><path fill="#dfa125" d="M0 0h12v6H0z"/><path fill="#ffd564" d="M0 3h28v19H0z"/><path fill="#3f8fd2" d="M5 24V12h18v12h-5v-6h-8v6z"/></svg></button>
    <button class="btn" aria-label="Lightroom"><span class="tile" style="background:#001e36;color:#31a8ff">Lr</span></button>
    <button class="btn run" aria-label="アプリ"><svg width="30" height="30"><path fill="#fff" d="M0 0h30v30H0z"/><path fill="none" stroke="#000" stroke-width="4.500" d="M6.500 20V9q0-3 4-3c4 0 6 2 7 5.500 5-1 7 2 7 5 0 5-4 6.500-8 6.500h-5"/><path fill="#000" d="M4 20h4.500v-3l3.500 3-7 6z"/><path fill="#f0304a" d="M4 14h5v3H4z"/></svg></button>
    <button class="btn run" aria-label="Creative Cloud"><svg width="28" height="28" viewBox="0 0 28 28"><defs><linearGradient id="c1"><stop offset="0" stop-color="#e83bbf"/><stop offset=".5" stop-color="#f5322f"/><stop offset="1" stop-color="#fdb813"/></linearGradient><linearGradient id="c2"><stop offset="0" stop-color="#5467e8"/><stop offset=".5" stop-color="#25b8e8"/><stop offset="1" stop-color="#7fd13b"/></linearGradient><linearGradient id="cm" x2="0" y2="1"><stop offset=".3" stop-color="#000"/><stop offset="1" stop-color="#fff"/></linearGradient><mask id="mk"><path fill="url(#cm)" d="M0 0h28v28H0z"/></mask></defs><rect width="28" height="28" rx="5" fill="url(#c1)"/><rect width="28" height="28" rx="5" fill="url(#c2)" mask="url(#mk)"/><path fill="none" stroke="#fff" stroke-width="1.800" d="M13 19.500c-2 1.500-8 1.500-8-4.500s7-6.500 9.500-3.500l4 5M11 9.500c4-4 12-2 12 4.500s-7 8-10.500 4L9.500 14.500M12.500 18c-3 1-4.500-1-4.500-3s3-3.500 5-1.500M15 12c2-2 5-1 5 2s-3 4-5 2"/></svg></button>
  </div>
  <div class="d-flex align-items-center ms-auto" style="margin-right:5px">
    <svg width="26" height="20"><path fill="#8fc4ef" d="M5 15a5 5 0 0 1 1-9C8-1 17-1 19 5c8 0 8 10 1 10z"/><path fill="#d5e9fa" d="M8 9c1-6 8-6 9-1 2-2 6 0 4 4H6z"/><path fill="#2f86d8" d="M13 11c4 5 3 8 0 8s-4-3 0-8z"/></svg>
    <span class="ms-2 ps-1" style="width:54px;font-size:16px">23°C</span>
    <button class="btn w33" aria-label="隠れているインジケーター"><svg width="16" height="9"><path class="s1" d="M.500 8.500L8 1l7.500 7.500"/></svg></button>
    <button class="btn" style="width:30px" aria-label="OneDrive"><svg width="20" height="13"><path fill="#999" stroke="#222" d="M4 12.500a4 4 0 0 1 0-7C6-1 14-1 15.500 4c5 0 5 8 0 8.500z"/><path fill="#fff" d="M5 12l7-6 6 5-2 1z"/></svg></button>
    <button class="btn" style="width:30px" aria-label="バッテリー"><svg width="20" height="13"><path d="M6 4h11v8H6z"/><path class="s1" d="M5 2.500h13v10H4.500M18.500 5v4M1 1v3h4V1M3 4v8h2"/></svg></button>
    <button class="btn" style="width:30px" aria-label="Wi-Fi"><svg width="16" height="16"><path class="s1" d="M1 15A16 16 0 0 1 15 1M4.500 15A12 12 0 0 1 15 5M8 15a8 8 0 0 1 7-6"/><circle cx="13.500" cy="13.500" r="1.700"/></svg></button>
    <button class="btn" style="width:32px" aria-label="音量"><svg width="20" height="14"><path class="s1" d="M1 4.500h3L7.500 1v12L4 9.500H1zM12 4l7 7M19 4l-7 7"/></svg></button>
    <button class="btn" style="width:28px;font-size:23px" aria-label="入力モード">A</button>
    <div class="clock text-center"><div>11:53</div><div>2021/09/15</div></div>
    <button class="btn" style="width:62px" aria-label="通知"><svg width="31" height="31"><path d="M1 1h20v16H11l-5 5v-5H1z"/><path stroke="#d6d6d6" stroke-width="1.500" d="M4 5h14M4 9h14M4 13h8"/><circle cx="20" cy="20" r="10" fill="#d6d6d6" stroke="#666"/><text x="20" y="25" font-size="13" font-weight="600" text-anchor="middle">3</text></svg></button>
    <div style="width:1px;height:50px;background:#aaa"></div>
  </div>
</footer>

<script src="https://cdn.jsdelivr.net/npm/bootstrap@5.3.0/dist/js/bootstrap.bundle.min.js"></script>
<script>
// Ruler ticks and labels: 3508 document pixels are 1170 screen pixels wide.
const scale = 1170 / 3508;
function ruler(el, origin, vertical, last, cursor) {
  let h = '';
  const tick = (p, len, cls = '') => h += vertical
    ? `<i class="${cls}" style="top:${p}px;height:1px;right:${cls ? 9 : 0}px;width:${len}px"></i>`
    : `<i class="${cls}" style="left:${p}px;width:1px;bottom:${cls ? 9 : 0}px;height:${len}px"></i>`;
  for (let v = -400; v <= last; v += 20) {
    const p = Math.round(origin + v * scale);
    const major = v % 200 === 0;
    tick(p, major ? 21 : v % 100 === 0 ? 6 : 3);
    if (major) h += `<span style="${vertical ? 'top' : 'left'}:${p + (vertical ? 3 : 2)}px">${Math.abs(v)}</span>`;
  }
  tick(cursor, 11, 'cur');
  el.innerHTML = h;
}
ruler(document.getElementById('rh'), 123, false, 3880, 835);
ruler(document.getElementById('rv'), 24, true, 2540, 456);
document.getElementById('swlist').innerHTML = ['RGB','CMYK','グレースケール','パステル','明','ピュア','暗','暗く','ペール'].map(n =>
  `<div class="swrow d-flex align-items-center"><svg width="6" height="12"><use href="#rchev"/></svg><svg class="ms-2" width="18" height="14"><use href="#folder"/></svg><span style="margin-left:12px">${n}</span></div>`).join('');
</script>
</body>
</html>
